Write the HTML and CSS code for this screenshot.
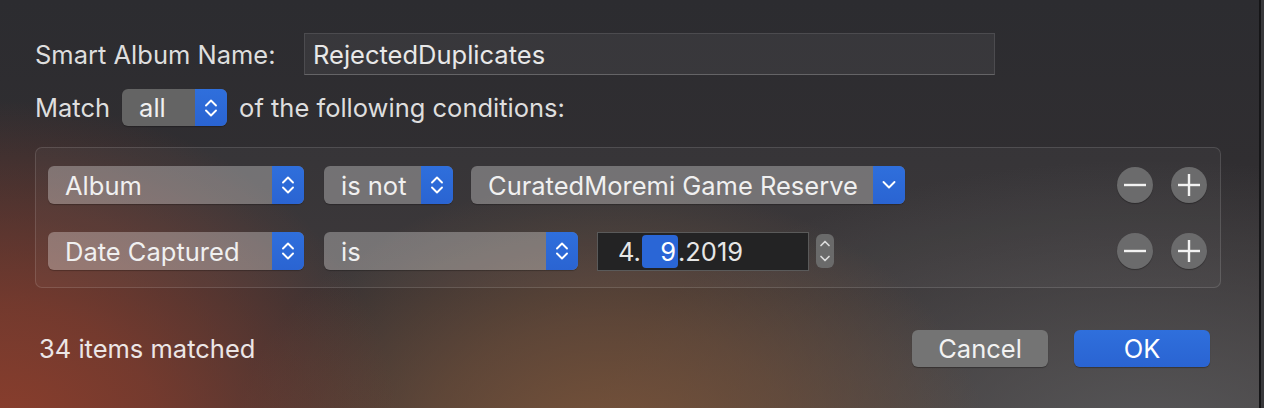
FILE: index.html
```html
<!DOCTYPE html>
<html>
<head>
<meta charset="utf-8">
<link rel="stylesheet" href="styles.css">
</head>
<body>
<div class="window">
  <div class="dialog">
    <div class="name-row">
      <span class="label name-label">Smart Album Name:</span>
      <div class="textfield">RejectedDuplicates</div>
    </div>
    <div class="match-row">
      <span class="label">Match</span>
      <div class="popup popup-all">
        <span class="popup-text">all</span>
        <span class="popup-arrow">
          <svg width="16" height="24" viewBox="0 0 16 24"><polyline points="3,9.5 8,4.5 13,9.5"/><polyline points="3,14.5 8,19.5 13,14.5"/></svg>
        </span>
      </div>
      <span class="label">of the following conditions:</span>
    </div>
    <div class="criteria">
      <div class="crit-row">
        <div class="popup popup-field">
          <span class="popup-text">Album</span>
          <span class="popup-arrow"><svg width="16" height="24" viewBox="0 0 16 24"><polyline points="3,9.5 8,4.5 13,9.5"/><polyline points="3,14.5 8,19.5 13,14.5"/></svg></span>
        </div>
        <div class="popup popup-op-short">
          <span class="popup-text">is not</span>
          <span class="popup-arrow"><svg width="16" height="24" viewBox="0 0 16 24"><polyline points="3,9.5 8,4.5 13,9.5"/><polyline points="3,14.5 8,19.5 13,14.5"/></svg></span>
        </div>
        <div class="popup popup-value">
          <span class="popup-text">CuratedMoremi Game Reserve</span>
          <span class="popup-arrow"><svg width="16" height="24" viewBox="0 0 16 24"><polyline points="2.5,9 8,14.5 13.5,9"/></svg></span>
        </div>
        <div class="row-buttons">
          <button class="round"><svg width="36" height="36" viewBox="0 0 36 36"><line x1="7" y1="18" x2="29" y2="18"/></svg></button>
          <button class="round"><svg width="36" height="36" viewBox="0 0 36 36"><line x1="7" y1="18" x2="29" y2="18"/><line x1="18" y1="7" x2="18" y2="29"/></svg></button>
        </div>
      </div>
      <div class="crit-row">
        <div class="popup popup-field">
          <span class="popup-text">Date Captured</span>
          <span class="popup-arrow"><svg width="16" height="24" viewBox="0 0 16 24"><polyline points="3,9.5 8,4.5 13,9.5"/><polyline points="3,14.5 8,19.5 13,14.5"/></svg></span>
        </div>
        <div class="popup popup-op-long">
          <span class="popup-text">is</span>
          <span class="popup-arrow"><svg width="16" height="24" viewBox="0 0 16 24"><polyline points="3,9.5 8,4.5 13,9.5"/><polyline points="3,14.5 8,19.5 13,14.5"/></svg></span>
        </div>
        <div class="date-group">
          <div class="datefield"><span>4.</span><span class="date-sel">9</span><span>.2019</span></div>
          <div class="stepper"><svg width="18" height="34" viewBox="0 0 18 34"><polyline points="5,11.5 9,7.5 13,11.5"/><polyline points="5,22.5 9,26.5 13,22.5"/></svg></div>
        </div>
        <div class="row-buttons">
          <button class="round"><svg width="36" height="36" viewBox="0 0 36 36"><line x1="7" y1="18" x2="29" y2="18"/></svg></button>
          <button class="round"><svg width="36" height="36" viewBox="0 0 36 36"><line x1="7" y1="18" x2="29" y2="18"/><line x1="18" y1="7" x2="18" y2="29"/></svg></button>
        </div>
      </div>
    </div>
    <div class="footer">
      <span class="status">34 items matched</span>
      <div class="buttons">
        <button class="btn btn-cancel">Cancel</button>
        <button class="btn btn-ok">OK</button>
      </div>
    </div>
  </div>
  <div class="edge"></div>
</div>
</body>
</html>
```

FILE: styles.css
```css
* { box-sizing: border-box; }
html, body { margin: 0; padding: 0; }
body {
  width: 1264px;
  height: 408px;
  overflow: hidden;
  font-family: "Inter", "Liberation Sans", sans-serif;
  font-size: 25.5px;
  color: #e6e6e6;
}
.window {
  display: flex;
  width: 1264px;
  height: 408px;
  background:
    radial-gradient(ellipse 400px 340px at 0px 440px, rgba(140,62,44,1), rgba(135,60,44,0.75) 40%, rgba(130,60,44,0) 100%),
    radial-gradient(ellipse 380px 280px at 610px 460px, rgba(122,84,58,1), rgba(118,82,58,0.6) 50%, rgba(118,82,58,0) 100%),
    radial-gradient(ellipse 560px 280px at 1150px 440px, rgba(88,88,90,0.95), rgba(88,88,90,0) 100%),
    linear-gradient(180deg, #2c2c30 0%, #302e31 40%, #3c3535 100%);
}
.dialog {
  width: 1259px;
  padding: 33px 0 0 35px;
}
.edge {
  width: 5px;
  border-left: 2px solid #151517;
  background: #38383b;
}
.label {
  color: #dedede;
  white-space: nowrap;
}
.name-row {
  display: flex;
  align-items: center;
  height: 42px;
}
.name-label { width: 269px; }
.textfield {
  width: 691px;
  height: 42px;
  display: flex;
  align-items: center;
  padding-left: 8px;
  background: rgba(255,255,255,0.055);
  border: 1px solid rgba(255,255,255,0.1);
  border-bottom-color: rgba(255,255,255,0.22);
  color: #e8e8e8;
}
.match-row {
  display: flex;
  align-items: center;
  gap: 12px;
  margin-top: 14px;
  height: 37px;
}
.popup {
  display: flex;
  height: 38px;
  border-radius: 6px;
  overflow: hidden;
  background: rgba(255,255,255,0.3);
  box-shadow: 0 1px 1px rgba(0,0,0,0.25);
  color: #f0f0f0;
}
.popup-text {
  flex: 1;
  display: flex;
  align-items: center;
  padding-left: 17px;
  white-space: nowrap;
}
.popup-arrow {
  width: 32px;
  display: flex;
  align-items: center;
  justify-content: center;
  background: linear-gradient(180deg, #2f6fdc, #2a64d2);
}
.popup-arrow svg polyline {
  fill: none;
  stroke: #fff;
  stroke-width: 1.9;
  stroke-linecap: round;
  stroke-linejoin: round;
}
.popup-all {
  width: 105px;
  height: 37px;
  background: #646464;
}
.criteria {
  width: 1186px;
  margin-top: 21px;
  padding: 18px 13px 17px 12px;
  border: 1px solid rgba(255,255,255,0.13);
  border-radius: 7px;
  background: rgba(255,255,255,0.035);
  display: flex;
  flex-direction: column;
  gap: 28px;
}
.crit-row {
  display: flex;
  align-items: center;
  gap: 19px;
  height: 38px;
}
.popup-field { width: 256px; }
.popup-op-short { width: 129px; margin-left: 1px; }
.popup-op-long { width: 254px; margin-left: 1px; }
.popup-value { width: 434px; margin-left: -1px; }
.date-group {
  display: flex;
  align-items: center;
  gap: 7px;
}
.datefield {
  width: 212px;
  height: 39px;
  display: flex;
  align-items: center;
  padding-left: 20px;
  background: #232324;
  border: 1px solid #5a5a5a;
  color: #e6e6e6;
}
.date-sel {
  display: inline-flex;
  align-items: center;
  justify-content: flex-end;
  width: 36px;
  height: 33px;
  padding-right: 2px;
  margin-left: 1px;
  background: #2a66d6;
  border-radius: 4px;
  color: #fff;
}
.stepper {
  width: 18px;
  height: 34px;
  border-radius: 6px;
  background: #6a6a6a;
  display: flex;
}
.stepper svg polyline {
  fill: none;
  stroke: #dcdcdc;
  stroke-width: 1.7;
  stroke-linecap: round;
  stroke-linejoin: round;
}
.row-buttons {
  margin-left: auto;
  display: flex;
  gap: 18px;
}
.round {
  width: 36px;
  height: 36px;
  padding: 0;
  border: none;
  border-radius: 50%;
  background: #6b6b6c;
  box-shadow: 0 1px 1px rgba(0,0,0,0.3);
  display: flex;
}
.round svg line {
  stroke: #f2f2f2;
  stroke-width: 2.4;
}
.footer {
  width: 1186px;
  margin-top: 42px;
  display: flex;
  align-items: center;
  justify-content: space-between;
  padding: 0 11px 0 4px;
}
.status { color: #ece6e6; }
.buttons {
  display: flex;
  gap: 26px;
}
.btn {
  width: 136px;
  height: 37px;
  border: none;
  border-radius: 6px;
  font-family: inherit;
  font-size: inherit;
  color: #f2f2f2;
  padding: 0;
  box-shadow: 0 1px 1px rgba(0,0,0,0.3);
}
.btn-cancel { background: #747474; }
.btn-ok { background: linear-gradient(180deg, #2f6fdc, #2a64d2); color: #fff; }
```
